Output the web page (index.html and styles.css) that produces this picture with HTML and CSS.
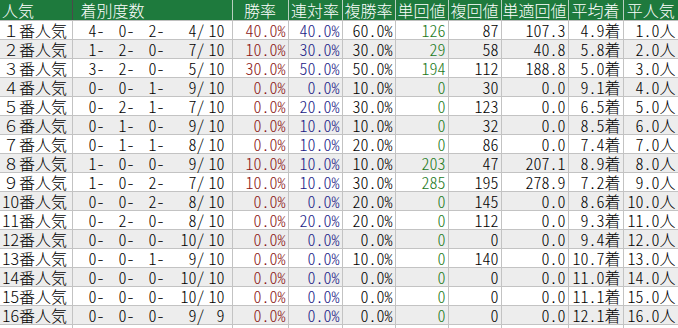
FILE: index.html
```html
<!DOCTYPE html>
<html lang="ja">
<head>
<meta charset="utf-8">
<link rel="stylesheet" href="styles.css">
</head>
<body>
<table class="stats">
<colgroup>
<col class="c-pop"><col class="c-rec"><col class="c-w"><col class="c-r"><col class="c-p"><col class="c-tv"><col class="c-fv"><col class="c-av"><col class="c-ar"><col class="c-ap">
</colgroup>
<thead>
<tr><th class="h-pop">人気</th><th class="h-rec">着別度数</th><th>勝率</th><th>連対率</th><th>複勝率</th><th>単回値</th><th>複回値</th><th>単適回値</th><th>平均着</th><th>平人気</th></tr>
</thead>
<tbody>
<tr><td class="pop full">１番人気</td><td class="rec"><div class="recg"><span>4-</span><span>0-</span><span>2-</span><span>4/</span><span>10</span></div></td><td class="win">40.0%</td><td class="ren">40.0%</td><td>60.0%</td><td class="tan">126</td><td>87</td><td>107.3</td><td>4.9着</td><td>1.0人</td></tr>
<tr><td class="pop full">２番人気</td><td class="rec"><div class="recg"><span>1-</span><span>2-</span><span>0-</span><span>7/</span><span>10</span></div></td><td class="win">10.0%</td><td class="ren">30.0%</td><td>30.0%</td><td class="tan">29</td><td>58</td><td>40.8</td><td>5.8着</td><td>2.0人</td></tr>
<tr><td class="pop full">３番人気</td><td class="rec"><div class="recg"><span>3-</span><span>2-</span><span>0-</span><span>5/</span><span>10</span></div></td><td class="win">30.0%</td><td class="ren">50.0%</td><td>50.0%</td><td class="tan">194</td><td>112</td><td>188.8</td><td>5.0着</td><td>3.0人</td></tr>
<tr><td class="pop full">４番人気</td><td class="rec"><div class="recg"><span>0-</span><span>0-</span><span>1-</span><span>9/</span><span>10</span></div></td><td class="win">0.0%</td><td class="ren">0.0%</td><td>10.0%</td><td class="tan">0</td><td>30</td><td>0.0</td><td>9.1着</td><td>4.0人</td></tr>
<tr><td class="pop full">５番人気</td><td class="rec"><div class="recg"><span>0-</span><span>2-</span><span>1-</span><span>7/</span><span>10</span></div></td><td class="win">0.0%</td><td class="ren">20.0%</td><td>30.0%</td><td class="tan">0</td><td>123</td><td>0.0</td><td>6.5着</td><td>5.0人</td></tr>
<tr><td class="pop full">６番人気</td><td class="rec"><div class="recg"><span>0-</span><span>1-</span><span>0-</span><span>9/</span><span>10</span></div></td><td class="win">0.0%</td><td class="ren">10.0%</td><td>10.0%</td><td class="tan">0</td><td>32</td><td>0.0</td><td>8.5着</td><td>6.0人</td></tr>
<tr><td class="pop full">７番人気</td><td class="rec"><div class="recg"><span>0-</span><span>1-</span><span>1-</span><span>8/</span><span>10</span></div></td><td class="win">0.0%</td><td class="ren">10.0%</td><td>20.0%</td><td class="tan">0</td><td>86</td><td>0.0</td><td>7.4着</td><td>7.0人</td></tr>
<tr><td class="pop full">８番人気</td><td class="rec"><div class="recg"><span>1-</span><span>0-</span><span>0-</span><span>9/</span><span>10</span></div></td><td class="win">10.0%</td><td class="ren">10.0%</td><td>10.0%</td><td class="tan">203</td><td>47</td><td>207.1</td><td>8.9着</td><td>8.0人</td></tr>
<tr><td class="pop full">９番人気</td><td class="rec"><div class="recg"><span>1-</span><span>0-</span><span>2-</span><span>7/</span><span>10</span></div></td><td class="win">10.0%</td><td class="ren">10.0%</td><td>30.0%</td><td class="tan">285</td><td>195</td><td>278.9</td><td>7.2着</td><td>9.0人</td></tr>
<tr><td class="pop">10番人気</td><td class="rec"><div class="recg"><span>0-</span><span>0-</span><span>2-</span><span>8/</span><span>10</span></div></td><td class="win">0.0%</td><td class="ren">0.0%</td><td>20.0%</td><td class="tan">0</td><td>145</td><td>0.0</td><td>8.6着</td><td>10.0人</td></tr>
<tr><td class="pop">11番人気</td><td class="rec"><div class="recg"><span>0-</span><span>2-</span><span>0-</span><span>8/</span><span>10</span></div></td><td class="win">0.0%</td><td class="ren">20.0%</td><td>20.0%</td><td class="tan">0</td><td>112</td><td>0.0</td><td>9.3着</td><td>11.0人</td></tr>
<tr><td class="pop">12番人気</td><td class="rec"><div class="recg"><span>0-</span><span>0-</span><span>0-</span><span>10/</span><span>10</span></div></td><td class="win">0.0%</td><td class="ren">0.0%</td><td>0.0%</td><td class="tan">0</td><td>0</td><td>0.0</td><td>9.4着</td><td>12.0人</td></tr>
<tr><td class="pop">13番人気</td><td class="rec"><div class="recg"><span>0-</span><span>0-</span><span>1-</span><span>9/</span><span>10</span></div></td><td class="win">0.0%</td><td class="ren">0.0%</td><td>10.0%</td><td class="tan">0</td><td>140</td><td>0.0</td><td>10.7着</td><td>13.0人</td></tr>
<tr><td class="pop">14番人気</td><td class="rec"><div class="recg"><span>0-</span><span>0-</span><span>0-</span><span>10/</span><span>10</span></div></td><td class="win">0.0%</td><td class="ren">0.0%</td><td>0.0%</td><td class="tan">0</td><td>0</td><td>0.0</td><td>11.0着</td><td>14.0人</td></tr>
<tr><td class="pop">15番人気</td><td class="rec"><div class="recg"><span>0-</span><span>0-</span><span>0-</span><span>10/</span><span>10</span></div></td><td class="win">0.0%</td><td class="ren">0.0%</td><td>0.0%</td><td class="tan">0</td><td>0</td><td>0.0</td><td>11.1着</td><td>15.0人</td></tr>
<tr><td class="pop">16番人気</td><td class="rec"><div class="recg"><span>0-</span><span>0-</span><span>0-</span><span>9/</span><span>9</span></div></td><td class="win">0.0%</td><td class="ren">0.0%</td><td>0.0%</td><td class="tan">0</td><td>0</td><td>0.0</td><td>12.1着</td><td>16.0人</td></tr>
<tr class="empty"><td></td><td></td><td></td><td></td><td></td><td></td><td></td><td></td><td></td><td></td></tr>
</tbody>
</table>
</body>
</html>
```

FILE: styles.css
```css
html, body {
  margin: 0;
  padding: 0;
  background: #ffffff;
}

.stats {
  border-collapse: collapse;
  table-layout: fixed;
  width: 678px;
  font-family: "Noto Sans CJK JP", "Noto Sans", sans-serif;
  font-size: 16px;
  font-weight: 300;
  font-feature-settings: "hwid";
  color: #000;
}

.c-pop { width: 72px; }
.c-rec { width: 160px; }
.c-w { width: 56px; }
.c-r { width: 54px; }
.c-p { width: 53px; }
.c-tv { width: 53px; }
.c-fv { width: 53px; }
.c-av { width: 67px; }
.c-ar { width: 55px; }
.c-ap { width: 55px; }

.stats th {
  background: #1e7a3d;
  color: #ffffff;
  font-weight: 300;
  height: 20px;
  line-height: 20px;
  padding: 0;
  text-align: center;
  white-space: nowrap;
  border-left: 1px solid #b9cfc0;
  border-bottom: 1px solid #c0c0c0;
}

.stats th.h-pop {
  text-align: left;
  padding-left: 2px;
  border-left: none;
}

.stats th.h-rec {
  text-align: left;
  padding-left: 8px;
  border-left: 1px solid #4a4a4a;
}

.stats td {
  height: 18px;
  line-height: 18px;
  padding: 0 2px 0 0;
  text-align: right;
  white-space: nowrap;
  border: 1px solid #c3c3c3;
  border-top: none;
}

.stats td:first-child {
  border-left: none;
}

.stats tbody tr:nth-child(even) td {
  background: #ededed;
}

.stats td.pop {
  text-align: left;
  padding: 0 0 0 2px;
  font-feature-settings: normal;
}

.stats td.pop.full {
  padding-left: 3px;
}

.stats td.rec {
  padding: 0;
}

.recg {
  display: grid;
  grid-template-columns: 34px 30px 30px 40px 20px;
  padding-right: 6px;
}

.recg span {
  text-align: right;
  padding-right: 2px;
}

.win { color: #8a1414; }
.ren { color: #1a1a86; }
.tan { color: #1c7a1c; }

.stats tr.empty td {
  background: #ffffff;
}
```
